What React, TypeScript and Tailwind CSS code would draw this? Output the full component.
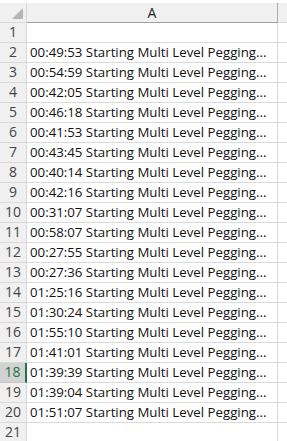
const times = [
  "",
  "00:49:53",
  "00:54:59",
  "00:42:05",
  "00:46:18",
  "00:41:53",
  "00:43:45",
  "00:40:14",
  "00:42:16",
  "00:31:07",
  "00:58:07",
  "00:27:55",
  "00:27:36",
  "01:25:16",
  "01:30:24",
  "01:55:10",
  "01:41:01",
  "01:39:39",
  "01:39:04",
  "01:51:07",
  "",
];

const font = { fontFamily: '"Open Sans", "Noto Sans", sans-serif' };

export default function App() {
  return (
    <div className="w-[287px] h-[441px] overflow-hidden bg-white pt-[3px]" style={font}>
      {/* column header */}
      <div className="flex h-[20px]">
        <div className="relative w-[27px] shrink-0 bg-[#f0f0f0] border-r border-b border-[#d8d8d8]">
          <svg className="absolute right-[3px] bottom-[3px]" width="11" height="11" viewBox="0 0 11 11">
            <polygon points="11,0 11,11 0,11" fill="#b5b5b5" />
          </svg>
        </div>
        <div className="w-[251px] shrink-0 bg-[#f0f0f0] border-r border-r-[#ababab] border-b border-b-[#a0a0a0] flex items-center justify-center text-[14px] text-[#262626]">
          A
        </div>
        <div className="flex-1 bg-[#f0f0f0] border-b border-[#d8d8d8]" />
      </div>

      {times.map((t, i) => {
        const n = i + 1;
        const active = n === 18;
        return (
          <div key={n} className="flex h-[20px]">
            <div
              className={
                active
                  ? "w-[27px] shrink-0 bg-[#d2d2d2] border-b border-[#c6c6c6] border-r-2 border-r-[#217346] flex items-end justify-center pb-[1px] text-[14px] leading-[18px] text-[#217346]"
                  : "w-[27px] shrink-0 bg-[#f0f0f0] border-b border-r border-[#d8d8d8] flex items-end justify-center pb-[1px] text-[14px] leading-[18px] text-[#444444]"
              }
            >
              {n}
            </div>
            <div className="w-[251px] shrink-0 border-b border-r border-[#dadada] flex items-end pl-[3px] pb-[1px] text-[13.25px] leading-[18px] text-[#111111] whitespace-nowrap overflow-hidden">
              {t ? `${t} Starting Multi Level Pegging...` : ""}
            </div>
            <div className="flex-1 border-b border-[#dadada]" />
          </div>
        );
      })}
    </div>
  );
}
